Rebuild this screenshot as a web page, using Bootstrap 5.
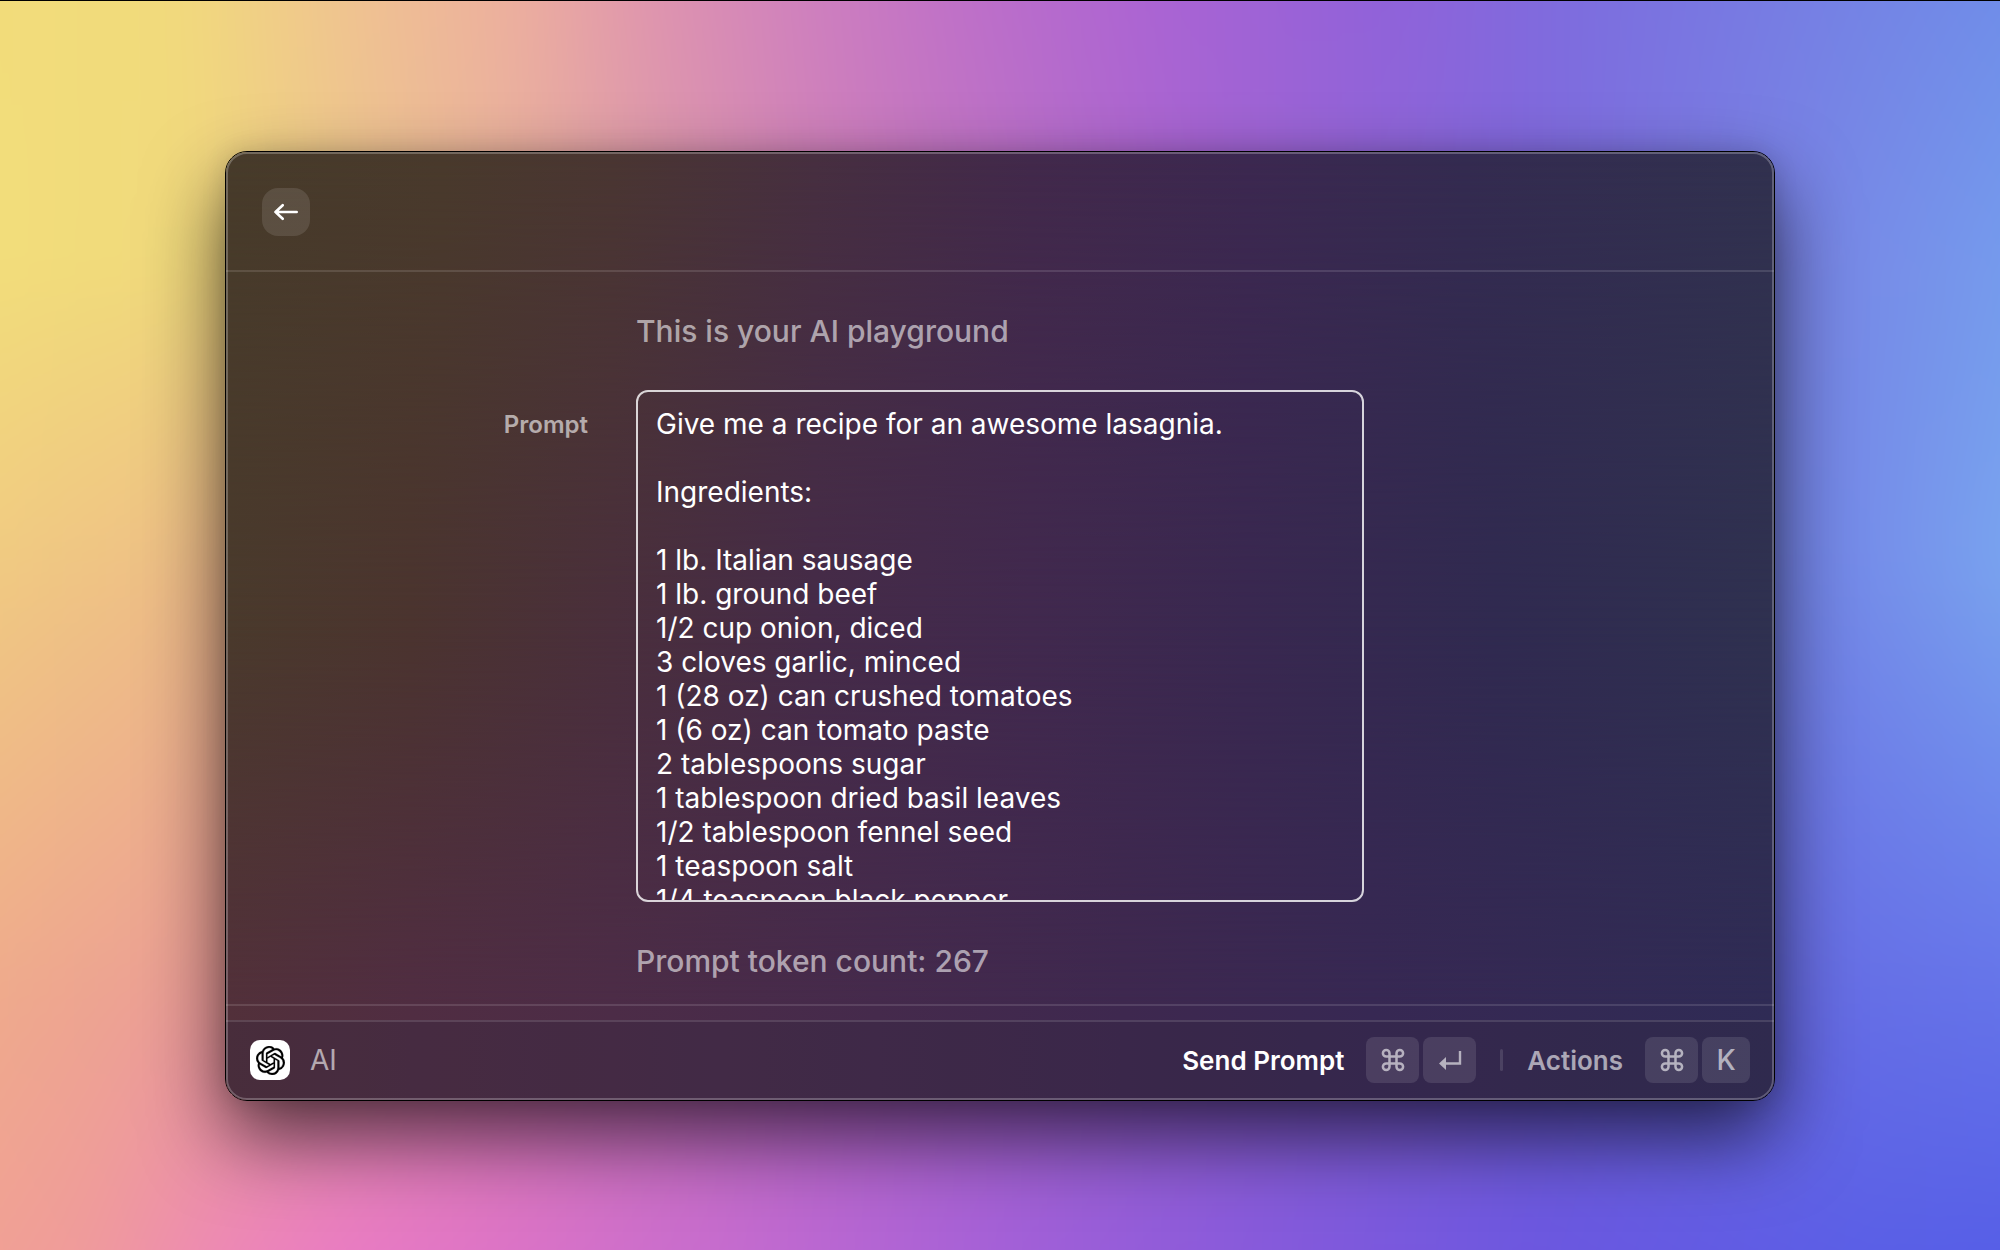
<!DOCTYPE html>
<html lang="en">
<head>
<meta charset="utf-8">
<meta name="viewport" content="width=device-width, initial-scale=1">
<title>AI</title>
<link href="https://cdn.jsdelivr.net/npm/bootstrap@5.3.0/dist/css/bootstrap.min.css" rel="stylesheet">
<style>
  body { font-family: Inter, "Liberation Sans", sans-serif; color: #fff; background: #a765d0; }
  /* colour mesh: horizontal ramps, each faded in vertically over the previous one */
  .mesh { position: absolute; inset: 0; z-index: -1; }
  .mesh i { position: absolute; inset: 0; }
  .wall { isolation: isolate; position: relative; overflow: hidden; min-height: 100vh; border-top: 1px solid #000; padding: 150px 11.25vw 149px; }
  .wall > .mesh { inset: -90px; filter: blur(30px); }
  .wall .r1 { background: linear-gradient(90deg, #f2dd7a 0%, #f2db7c 12%, #f0c094 21%, #eeae9f 28%, #e093b0 34%, #cf80c0 41%, #bf6fca 48%, #ae64d4 56%, #9260da 67%, #7c6edf 77%, #7480e4 89%, #6b8eea 100%); }
  .wall .r2 { background: linear-gradient(90deg, #f3df7a 0%, #f0d97c 13%, #eab69a 26%, #cf80b8 42%, #a865d0 58%, #8068dc 74%, #7888e6 88%, #74a4f0 100%); -webkit-mask: linear-gradient(transparent 0%, #000 25%); mask: linear-gradient(transparent 0%, #000 25%); }
  .wall .r3 { background: linear-gradient(90deg, #f1cf80 0%, #eebf86 12%, #e090a8 26%, #c070c4 42%, #9c62d2 58%, #7868dc 74%, #7488e8 88%, #7cb0f2 100%); -webkit-mask: linear-gradient(transparent 25%, #000 46%); mask: linear-gradient(transparent 25%, #000 46%); }
  .wall .r4 { background: linear-gradient(90deg, #f0b088 0%, #eca094 12%, #e080b0 26%, #b868c8 42%, #9060d4 58%, #7060dc 74%, #6670e6 90%, #6678ec 100%); -webkit-mask: linear-gradient(transparent 46%, #000 75%); mask: linear-gradient(transparent 46%, #000 75%); }
  .wall .r5 { background: linear-gradient(90deg, #f2a192 0%, #f0989e 8%, #ee84bc 14%, #ea76cc 20%, #dc70cc 27%, #c46ad2 38%, #a45fda 50%, #8658dc 62%, #6a54e0 75%, #565ae6 90%, #4e56e6 100%); -webkit-mask: linear-gradient(transparent 75%, #000 100%); mask: linear-gradient(transparent 75%, #000 100%); }

  .panel { position: relative; isolation: isolate; border: 1px solid #000; border-radius: 22px; overflow: hidden; }
  .shade { border-radius: 22px; box-shadow: 0 36px 80px rgba(0,0,0,.64), 0 0 24px rgba(0,0,0,.12); }
  .panel .p1 { background: linear-gradient(90deg, #473b2a 0%, #493a2c 14%, #4a3632 25%, #472f40 38%, #42294b 52%, #3c2850 66%, #342b50 80%, #31314f 100%); }
  .panel .p2 { background: linear-gradient(90deg, #4a3a2c 0%, #4b342f 12%, #4a2f3c 25%, #452b48 38%, #41294e 52%, #392850 66%, #302a50 82%, #2f3150 100%); -webkit-mask: linear-gradient(transparent, #000 50%); mask: linear-gradient(transparent, #000 50%); }
  .panel .p3 { background: linear-gradient(90deg, #52303a 0%, #502d42 12%, #4c2c47 25%, #452a4c 42%, #3e284f 58%, #372853 74%, #2f2b55 100%); -webkit-mask: linear-gradient(transparent 50%, #000 90%); mask: linear-gradient(transparent 50%, #000 90%); }
  /* inner light ring drawn over the window content */
  .panel::after { content: ""; position: absolute; inset: 0; border: 2px solid rgba(255,255,255,.24); border-radius: 21px; pointer-events: none; }

  .top-bar { padding: 36px; height: 120px; border-bottom: 2px solid rgba(255,255,255,.12); }
  .back-btn { width: 48px; height: 48px; border: 0; border-radius: 16px; background: rgba(255,255,255,.11); }
  .form-area { display: grid; grid-template-columns: 1fr 728px 1fr; column-gap: 48px; padding: 39px 0 23px; border-bottom: 2px solid rgba(255,255,255,.12); }
  .mid { grid-column: 2; }
  .note { font-size: 30px; line-height: 40px; font-weight: 500; color: rgba(255,255,255,.58); margin: 0 0 39px; }
  .note-end { margin: 39px 0 0; }
  .prompt-label { grid-column: 1; font-size: 24px; line-height: 34px; font-weight: 600; color: rgba(255,255,255,.6); padding-top: 18px; }
  .form-control.prompt-box { grid-column: 2; height: 512px; resize: none; overflow: hidden; padding: 15px 18px; font-size: 28px; line-height: 34px; color: #fff; background: transparent; border: 2px solid rgba(255,255,255,.8); border-radius: 12px; box-shadow: none; }
  .strip { height: 14px; }
  .foot-bar { height: 80px; padding: 0 24px 2px; border-top: 2px solid rgba(255,255,255,.12); background: rgba(50,40,62,.3); }
  .app-logo { width: 40px; height: 40px; border-radius: 10px; background: #fff; }
  .app-name { font-size: 28px; color: rgba(255,255,255,.6); }
  .act { padding: 0; border: 0; background: none; color: rgba(255,255,255,.6); font-size: 26px; font-weight: 600; }
  .act.main-act { color: #fff; }
  .act-text { margin-right: 18px; }
  .act kbd { width: 53px; height: 46px; padding: 0; border-radius: 8px; background: rgba(255,255,255,.11); color: rgba(255,255,255,.6); font: 500 28px Inter, sans-serif; }
  .act kbd.slim { width: 48px; }
  .sep { width: 3px; height: 22px; border-radius: 2px; background: rgba(255,255,255,.12); margin: 0 24px; }
</style>
<script src="https://cdn.jsdelivr.net/npm/bootstrap@5.3.0/dist/js/bootstrap.bundle.min.js"></script>
</head>
<body>
<svg class="d-none" xmlns="http://www.w3.org/2000/svg">
  <symbol id="cmd" viewBox="0 0 24 24"><path d="M8.500 8.500h7v7h-7zM8.500 8.500H5.200A3.300 3.300 0 1 1 8.500 5.200zM15.500 8.500V5.200A3.300 3.300 0 1 1 18.800 8.500zM15.500 15.500h3.300a3.300 3.300 0 1 1-3.300 3.300zM8.500 15.500v3.300a3.300 3.300 0 1 1-3.300-3.300z" fill="none" stroke="currentColor" stroke-width="2.500"/></symbol>
</svg>
<div class="wall">
  <div class="mesh"><i class="r1"></i><i class="r2"></i><i class="r3"></i><i class="r4"></i><i class="r5"></i></div>
  <div class="shade">
  <main class="panel">
    <div class="mesh"><i class="p1"></i><i class="p2"></i><i class="p3"></i></div>
    <header class="top-bar">
      <button type="button" class="back-btn d-flex align-items-center justify-content-center p-0" aria-label="Back">
        <svg width="24" height="24" viewBox="0 0 24 24" fill="none" stroke="#fff" stroke-width="2.600" stroke-linecap="round" stroke-linejoin="round"><path d="M22.700 12H1.500M8.700 5.200L1.500 12l7.200 6.800"/></svg>
      </button>
    </header>
    <form class="form-area">
      <p class="note mid">This is your AI playground</p>
      <label for="prompt" class="prompt-label text-end">Prompt</label>
      <textarea id="prompt" class="form-control prompt-box" spellcheck="false">Give me a recipe for an awesome lasagnia.

Ingredients:

1 lb. Italian sausage
1 lb. ground beef
1/2 cup onion, diced
3 cloves garlic, minced
1 (28 oz) can crushed tomatoes
1 (6 oz) can tomato paste
2 tablespoons sugar
1 tablespoon dried basil leaves
1/2 tablespoon fennel seed
1 teaspoon salt
1/4 teaspoon black pepper</textarea>
      <p class="note note-end mid">Prompt token count: 267</p>
    </form>
    <div class="strip"></div>
    <footer class="foot-bar d-flex align-items-center">
      <div class="app-logo d-flex align-items-center justify-content-center">
        <svg width="29" height="29" viewBox="0 0 24 24" fill="#000" stroke="#000" stroke-width=".2"><path d="M22.2819 9.8211a5.9847 5.9847 0 0 0-.5157-4.9108 6.0462 6.0462 0 0 0-6.5098-2.9A6.0651 6.0651 0 0 0 4.9807 4.1818a5.9847 5.9847 0 0 0-3.9977 2.9 6.0462 6.0462 0 0 0 .7427 7.0966 5.98 5.98 0 0 0 .511 4.9107 6.051 6.051 0 0 0 6.5146 2.9001A5.9847 5.9847 0 0 0 13.2599 24a6.0557 6.0557 0 0 0 5.7718-4.2058 5.9894 5.9894 0 0 0 3.9977-2.9001 6.0557 6.0557 0 0 0-.7475-7.0729zm-9.022 12.6081a4.4755 4.4755 0 0 1-2.8764-1.0408l.1419-.0804 4.7783-2.7582a.7948.7948 0 0 0 .3927-.6813v-6.7369l2.02 1.1686a.071.071 0 0 1 .038.052v5.5826a4.504 4.504 0 0 1-4.4945 4.4944zm-9.6607-4.1254a4.4708 4.4708 0 0 1-.5346-3.0137l.142.0852 4.783 2.7582a.7712.7712 0 0 0 .7806 0l5.8428-3.3685v2.3324a.0804.0804 0 0 1-.0332.0615L9.74 19.9502a4.4992 4.4992 0 0 1-6.1408-1.6464zM2.3408 7.8956a4.485 4.485 0 0 1 2.3655-1.9728V11.6a.7664.7664 0 0 0 .3879.6765l5.8144 3.3543-2.0201 1.1685a.0757.0757 0 0 1-.071 0l-4.8303-2.7865A4.504 4.504 0 0 1 2.3408 7.872zm16.5963 3.8558L13.1038 8.364 15.1192 7.2a.0757.0757 0 0 1 .071 0l4.8303 2.7913a4.4944 4.4944 0 0 1-.6765 8.1042v-5.6772a.79.79 0 0 0-.407-.667zm2.0107-3.0231l-.142-.0852-4.7735-2.7818a.7759.7759 0 0 0-.7854 0L9.409 9.2297V6.8974a.0662.0662 0 0 1 .0284-.0615l4.8303-2.7866a4.4992 4.4992 0 0 1 6.6802 4.66zM8.3065 12.863l-2.02-1.1638a.0804.0804 0 0 1-.038-.0567V6.0742a4.4992 4.4992 0 0 1 7.3757-3.4537l-.142.0805L8.704 5.459a.7948.7948 0 0 0-.3927.6813zm1.0976-2.3654l2.602-1.4998 2.6069 1.4998v2.9994l-2.5974 1.4997-2.6067-1.4997Z"/></svg>
      </div>
      <span class="app-name ms-3 ps-1">AI</span>
      <button type="button" class="act main-act d-flex align-items-center gap-1 ms-auto"><span class="act-text">Send Prompt</span>
        <kbd class="d-flex align-items-center justify-content-center"><svg width="24" height="24"><use href="#cmd"/></svg></kbd>
        <kbd class="d-flex align-items-center justify-content-center"><svg width="24" height="20" viewBox="0 0 24 20"><path d="M22 1v12.500H8" fill="none" stroke="currentColor" stroke-width="2.400"/><path d="M1 13.500L8 7v13z" fill="currentColor"/></svg></kbd>
      </button>
      <span class="sep"></span>
      <button type="button" class="act d-flex align-items-center gap-1"><span class="act-text">Actions</span>
        <kbd class="d-flex align-items-center justify-content-center"><svg width="24" height="24"><use href="#cmd"/></svg></kbd>
        <kbd class="slim d-flex align-items-center justify-content-center">K</kbd>
      </button>
    </footer>
  </main>
  </div>
</div>
</body>
</html>
